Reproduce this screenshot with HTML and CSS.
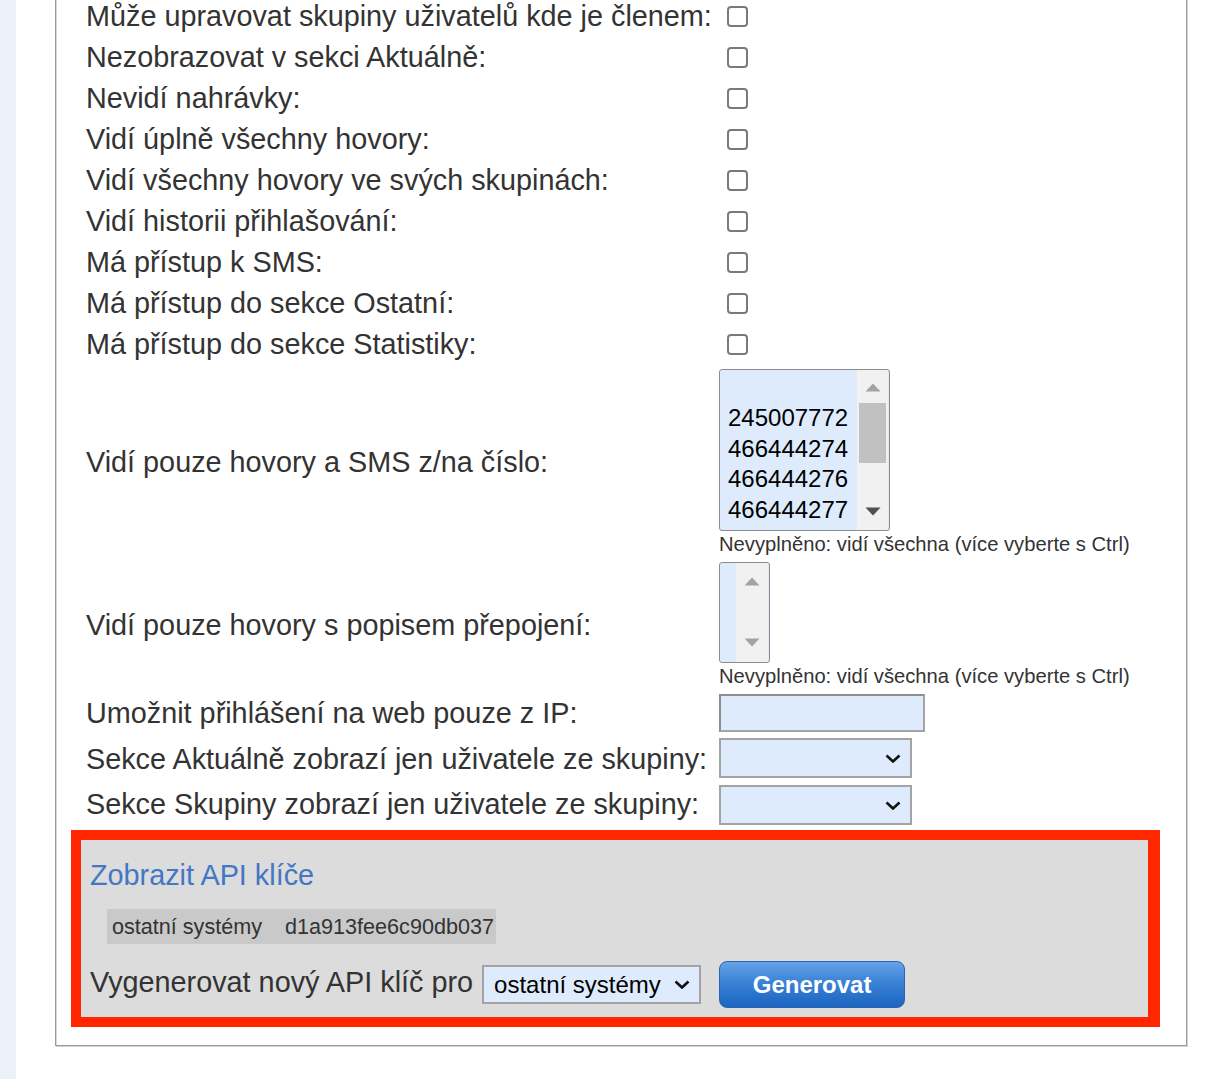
FILE: index.html
```html
<!DOCTYPE html>
<html lang="cs">
<head>
<meta charset="utf-8">
<title>Uživatel</title>
<link rel="stylesheet" href="styles.css">
</head>
<body>
<div class="page">
  <aside class="strip"></aside>
  <main class="content">
    <div class="panel">
      <div class="form">
        <div class="row cb-row"><div class="label">Může upravovat skupiny uživatelů kde je členem:</div><div class="ctl"><input type="checkbox" class="cb"></div></div>
        <div class="row cb-row"><div class="label">Nezobrazovat v sekci Aktuálně:</div><div class="ctl"><input type="checkbox" class="cb"></div></div>
        <div class="row cb-row"><div class="label">Nevidí nahrávky:</div><div class="ctl"><input type="checkbox" class="cb"></div></div>
        <div class="row cb-row"><div class="label">Vidí úplně všechny hovory:</div><div class="ctl"><input type="checkbox" class="cb"></div></div>
        <div class="row cb-row"><div class="label">Vidí všechny hovory ve svých skupinách:</div><div class="ctl"><input type="checkbox" class="cb"></div></div>
        <div class="row cb-row"><div class="label">Vidí historii přihlašování:</div><div class="ctl"><input type="checkbox" class="cb"></div></div>
        <div class="row cb-row"><div class="label">Má přístup k SMS:</div><div class="ctl"><input type="checkbox" class="cb"></div></div>
        <div class="row cb-row"><div class="label">Má přístup do sekce Ostatní:</div><div class="ctl"><input type="checkbox" class="cb"></div></div>
        <div class="row cb-row"><div class="label">Má přístup do sekce Statistiky:</div><div class="ctl"><input type="checkbox" class="cb"></div></div>

        <div class="row lb-row1">
          <div class="label">Vidí pouze hovory a SMS z/na číslo:</div>
          <div class="ctl ctl-col">
            <div class="listbox lb-big">
              <div class="options">
                <div class="opt">&nbsp;</div>
                <div class="opt">245007772</div>
                <div class="opt">466444274</div>
                <div class="opt">466444276</div>
                <div class="opt">466444277</div>
              </div>
              <div class="sbar">
                <svg class="arr arr-up" width="16" height="9" viewBox="0 0 16 9"><path d="M8 0.5 L15.5 8.5 L0.5 8.5 Z" fill="#a3a3a3"/></svg>
                <div class="thumb"></div>
                <svg class="arr arr-down dark" width="16" height="9" viewBox="0 0 16 9"><path d="M0.5 0.5 L15.5 0.5 L8 8.5 Z" fill="#505050"/></svg>
              </div>
            </div>
            <div class="help">Nevyplněno: vidí všechna (více vyberte s Ctrl)</div>
          </div>
        </div>

        <div class="row lb-row2">
          <div class="label">Vidí pouze hovory s popisem přepojení:</div>
          <div class="ctl ctl-col">
            <div class="listbox lb-small">
              <div class="options"></div>
              <div class="sbar sbar-empty">
                <svg class="arr" width="16" height="9" viewBox="0 0 16 9"><path d="M8 0.5 L15.5 8.5 L0.5 8.5 Z" fill="#a3a3a3"/></svg>
                <svg class="arr" width="16" height="9" viewBox="0 0 16 9"><path d="M0.5 0.5 L15.5 0.5 L8 8.5 Z" fill="#a3a3a3"/></svg>
              </div>
            </div>
            <div class="help">Nevyplněno: vidí všechna (více vyberte s Ctrl)</div>
          </div>
        </div>

        <div class="row in-row">
          <div class="label">Umožnit přihlášení na web pouze z IP:</div>
          <div class="ctl"><input type="text" class="txt"></div>
        </div>
        <div class="row sel-row1">
          <div class="label">Sekce Aktuálně zobrazí jen uživatele ze skupiny:</div>
          <div class="ctl"><div class="sel sel-empty"><span></span><svg class="chev" width="16" height="9" viewBox="0 0 16 9"><path d="M1.5 1.5 L8 7.5 L14.5 1.5" fill="none" stroke="#111" stroke-width="2.6"/></svg></div></div>
        </div>
        <div class="row sel-row2">
          <div class="label">Sekce Skupiny zobrazí jen uživatele ze skupiny:</div>
          <div class="ctl"><div class="sel sel-empty"><span></span><svg class="chev" width="16" height="9" viewBox="0 0 16 9"><path d="M1.5 1.5 L8 7.5 L14.5 1.5" fill="none" stroke="#111" stroke-width="2.6"/></svg></div></div>
        </div>
      </div>

      <div class="api">
        <a class="api-link" href="#">Zobrazit API klíče</a>
        <div class="keys"><span class="k-name">ostatní systémy</span><span class="k-val">d1a913fee6c90db037</span></div>
        <div class="gen-row">
          <span class="gen-label">Vygenerovat nový API klíč pro</span>
          <div class="sel sel-api"><span>ostatní systémy</span><svg class="chev" width="16" height="9" viewBox="0 0 16 9"><path d="M1.5 1.5 L8 7.5 L14.5 1.5" fill="none" stroke="#111" stroke-width="2.6"/></svg></div>
          <button class="btn" type="button">Generovat</button>
        </div>
      </div>
    </div>
  </main>
</div>
</body>
</html>
```
FILE: styles.css
```css
html, body {
  margin: 0;
  padding: 0;
  background: #ffffff;
}
body {
  font-family: "Liberation Sans", Arial, sans-serif;
  color: #333333;
  overflow: hidden;
}
.page {
  display: flex;
  min-height: 1079px;
}
.strip {
  width: 16px;
  flex: none;
  background: #edf1f9;
}
.content {
  flex: none;
  padding-left: 39px;
}
.panel {
  width: 1132px;
  box-sizing: border-box;
  margin-top: -5px;
  border: 1px solid #9b9b9b;
  border-top: none;
  box-shadow: 1px 1px 0 #d2d2d2, inset 1px 0 0 #d8d8d8;
  padding: 0 0 18px 0;
}
.form {
  padding-left: 30px;
}
.row {
  display: flex;
  align-items: center;
}
.label {
  width: 633px;
  flex: none;
  font-size: 28.8px;
  line-height: 33px;
  padding-top: 2px;
  white-space: nowrap;
}
.cb-row {
  height: 41px;
}
.ctl {
  display: flex;
  align-items: center;
}
.ctl-col {
  flex-direction: column;
  align-items: flex-start;
}
.cb {
  appearance: none;
  -webkit-appearance: none;
  box-sizing: border-box;
  width: 21px;
  height: 21px;
  margin: 1px 0 0 8px;
  border: 2px solid #7a7a7a;
  border-radius: 4px;
  background: #ffffff;
}
.lb-row1 .ctl { padding: 5px 0 3px 0; }
.lb-row2 .ctl { padding: 4px 0 3px 0; }
.in-row .ctl { padding: 4px 0 3px 0; }
.sel-row1 .ctl { padding: 3px 0 3px 0; }
.sel-row2 .ctl { padding: 4px 0 0 0; }

.listbox {
  display: flex;
  box-sizing: border-box;
  border: 1px solid #8d8d8d;
  border-radius: 3px;
  background: #ddebfc;
  overflow: hidden;
}
.lb-big {
  width: 171px;
  height: 162px;
}
.lb-small {
  width: 51px;
  height: 101px;
}
.options {
  flex: 1;
  padding: 3px 0 0 8px;
  font-size: 24px;
  line-height: 30.4px;
  color: #000000;
}
.sbar {
  flex: none;
  width: 31px;
  margin-right: 1px;
  background: #f1f1f1;
  display: flex;
  flex-direction: column;
  align-items: center;
}
.lb-big .arr-up { margin-top: 13px; }
.thumb {
  width: 27px;
  height: 60px;
  margin-top: 11px;
  background: #c1c1c1;
}
.lb-big .arr-down { margin-top: 44px; }
.sbar-empty {
  width: 32px;
  margin-right: 1px;
  justify-content: space-between;
  padding: 14px 0 15px 0;
  box-sizing: border-box;
}
.help {
  font-size: 20.2px;
  line-height: 24px;
  padding-top: 1px;
  margin-bottom: -1px;
  color: #333333;
  white-space: nowrap;
}
.txt {
  box-sizing: border-box;
  width: 206px;
  height: 38px;
  margin: 0;
  border: 2px solid #a3a3a3;
  border-top-color: #8e8e8e;
  border-left-color: #8e8e8e;
  background: #ddebfc;
  font-family: inherit;
  font-size: 24px;
  padding: 0 6px;
}
.sel {
  display: flex;
  align-items: center;
  justify-content: space-between;
  box-sizing: border-box;
  border: 2px solid #a3a3a3;
  background: #ddebfc;
  font-size: 24px;
  color: #000000;
}
.sel-empty {
  width: 193px;
  height: 40px;
  padding: 0 9px 0 11px;
}
.chev {
  flex: none;
  display: block;
}

.api {
  margin: 5px 0 0 15px;
  width: 1089px;
  box-sizing: border-box;
  border: 10px solid #ff2600;
  border-right-width: 12px;
  background: #dcdcdc;
  padding: 17px 0 9px 9px;
  display: flex;
  flex-direction: column;
  align-items: flex-start;
}
.api-link {
  font-size: 28.8px;
  line-height: 33px;
  padding-top: 2px;
  margin-bottom: -2px;
  color: #4277c4;
  text-decoration: none;
}
.keys {
  display: flex;
  align-items: center;
  height: 35px;
  margin: 19px 0 0 17px;
  background: #c9c9c9;
  font-size: 21.6px;
  color: #333333;
}
.k-name {
  padding: 0 11px 0 5px;
}
.k-val {
  padding: 0 2px 0 12px;
}
.gen-row {
  display: flex;
  align-items: center;
  margin-top: 17px;
}
.gen-label {
  font-size: 28.8px;
  line-height: 33px;
  margin-right: 9px;
  position: relative;
  top: -2px;
}
.sel-api {
  width: 219px;
  height: 39px;
  padding: 0 9px 0 10px;
}
.btn {
  box-sizing: border-box;
  width: 186px;
  height: 47px;
  margin: 0 0 0 18px;
  border: 1px solid #2c64b0;
  border-radius: 8px;
  background: linear-gradient(to bottom, #64a2e6 0%, #3a83d6 45%, #1b64c0 100%);
  color: #ffffff;
  font-family: inherit;
  font-weight: bold;
  font-size: 24px;
  padding: 0;
  cursor: pointer;
}
```
